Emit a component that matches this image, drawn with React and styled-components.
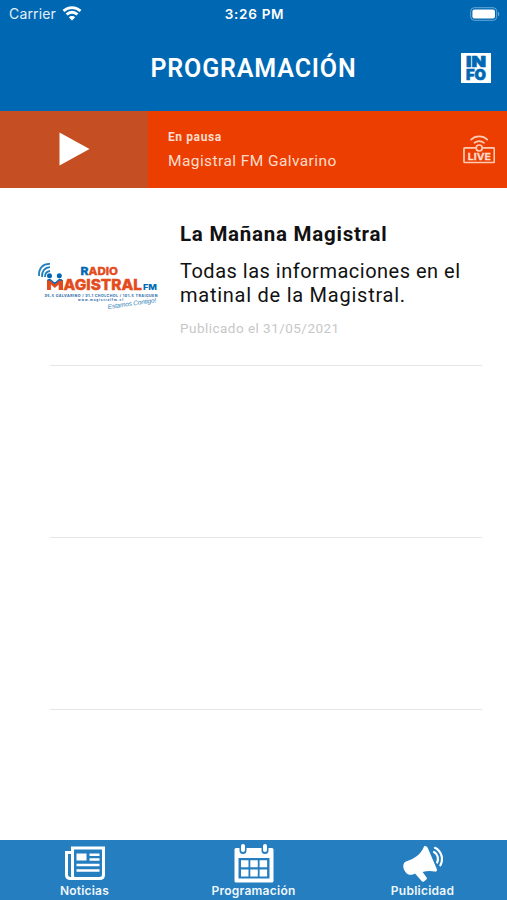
import React from 'react';
import styled, { createGlobalStyle } from 'styled-components';

const GlobalStyle = createGlobalStyle`
  * {
    box-sizing: border-box;
  }

  body {
    margin: 0;
    background: #ffffff;
    font-family: 'Roboto', 'Liberation Sans', sans-serif;
  }
`;

const Screen = styled.div`
  display: flex;
  flex-direction: column;
  width: 507px;
  height: 900px;
  overflow: hidden;
  background: #ffffff;
`;

const StatusBar = styled.div`
  display: grid;
  grid-template-columns: 1fr auto 1fr;
  align-items: center;
  height: 27px;
  padding: 0 7px 0 9px;
  background: #0068b3;
  color: #ffffff;
  font-family: 'Inter', sans-serif;
  font-size: 14px;
  line-height: 26px;
`;

const Carrier = styled.div`
  display: flex;
  align-items: center;
  gap: 6px;
  height: 26px;
  color: #e3f0f8;
  letter-spacing: 0.15px;
`;

const Clock = styled.div`
  padding-top: 1px;
  font-weight: 600;
  font-size: 13.5px;
  letter-spacing: 0.7px;
`;

const BatterySlot = styled.div`
  display: flex;
  justify-content: flex-end;
`;

const Header = styled.header`
  display: grid;
  grid-template-columns: 46px 1fr 30px;
  align-items: center;
  height: 84px;
  padding: 0 16px 2px 0;
  background: #0068b3;
`;

const HeaderTitle = styled.h1`
  grid-column: 2;
  margin: 2px 0 0;
  text-align: center;
  color: #ffffff;
  font-size: 25px;
  font-weight: 600;
  line-height: 30px;
  letter-spacing: 0.85px;
`;

const Player = styled.section`
  display: flex;
  height: 77px;
  background: #ec3e00;
  color: #ffdccb;
`;

const PlayButton = styled.button`
  display: flex;
  align-items: center;
  width: 148px;
  padding: 0 0 2px 59px;
  border: 0;
  background: #c54e22;
`;

const PlayerInfo = styled.div`
  flex: 1;
  padding: 17px 0 0 20px;
`;

const PlayerState = styled.div`
  font-size: 12px;
  font-weight: 700;
  line-height: 18px;
  letter-spacing: 0.6px;
`;

const PlayerStation = styled.div`
  margin-top: 5px;
  font-size: 15.5px;
  line-height: 20px;
  letter-spacing: 0.42px;
`;

const LiveSlot = styled.div`
  padding: 24px 12px 0 0;
`;

const List = styled.main`
  flex: 1;
`;

const Row = styled.article`
  display: flex;
  height: ${props => props.$height || 172}px;
  margin: 0 25px 0 50px;
  border-bottom: 1px solid #e6e6e6;
`;

const Thumb = styled.div`
  flex: none;
  width: 130px;
  padding-top: 72px;
  margin-left: -14px;
  margin-right: 14px;
`;

const RowBody = styled.div`
  flex: none;
  width: 310px;
  color: #111111;
`;

const RowTitle = styled.h2`
  margin: 34px 0 0;
  font-size: 20.5px;
  font-weight: 700;
  line-height: 24px;
  letter-spacing: 0.75px;
`;

const RowText = styled.p`
  margin: 13px 0 0;
  font-size: 20px;
  line-height: 24px;
`;

const TextLine = styled.span`
  display: block;
  letter-spacing: ${props => props.$spacing};
`;

const RowDate = styled.div`
  margin-top: 12px;
  color: #c7c7c7;
  font-size: 13.5px;
  line-height: 18px;
  letter-spacing: 0.47px;
`;

const TabBar = styled.nav`
  display: grid;
  grid-template-columns: repeat(3, 1fr);
  height: 60px;
  background: #257ebf;
`;

const Tab = styled.div`
  display: flex;
  flex-direction: column;
  align-items: center;
  padding-top: 4px;
  color: #eef7fc;
`;

const IconSlot = styled.div`
  display: flex;
  align-items: center;
  justify-content: center;
  height: 40px;
`;

const TabLabel = styled.span`
  margin-top: -1px;
  font-family: 'Inter', sans-serif;
  font-size: 12px;
  font-weight: 600;
  line-height: 15px;
  letter-spacing: ${props => props.$spacing || '0.2px'};
`;

const WifiIcon = () => (
  <svg width="20" height="15" viewBox="0 0 20 15" fill="none" stroke="#ffffff" strokeWidth="2.8">
    <path d="M1.5 5C6.2.4 13.8.4 18.5 5" />
    <path d="M4.6 8.500c3-3 7.800-3 10.800 0" />
    <path d="M10 14.400 6.800 11.200c1.700-1.700 4.700-1.700 6.400 0Z" fill="#ffffff" stroke="none" />
  </svg>
);

const BatteryIcon = () => (
  <svg width="30" height="14" viewBox="0 0 30 14">
    <rect x=".7" y=".7" width="26" height="12.6" rx="3.6" fill="none" stroke="#6aa8d4" />
    <rect x="2.4" y="2.4" width="22.6" height="9.2" rx="2" fill="#ffffff" />
    <path d="M28 4.7c1.7.7 1.7 3.9 0 4.6Z" fill="#6aa8d4" />
  </svg>
);

const InfoIcon = () => (
  <svg width="30" height="30" viewBox="0 0 30 30">
    <rect width="30" height="30" fill="#ffffff" />
    <g fill="#0068b3" stroke="#0068b3" strokeWidth=".6" fontFamily="Inter, sans-serif" fontWeight="900" fontSize="14.5">
      <text x="5" y="13.6" textLength="20" lengthAdjust="spacingAndGlyphs">IN</text>
      <text x="5" y="26.5" textLength="20" lengthAdjust="spacingAndGlyphs">FO</text>
    </g>
  </svg>
);

const LiveIcon = () => (
  <svg width="32" height="30" viewBox="0 0 32 30" fill="none" stroke="#ffcbb5" strokeWidth="1.7">
    <path d="M12.800 12.800H1.800q-.8 0-.8.8v13.100q0 .8.8.8h28.700q.8 0 .8-.8V13.600q0-.8-.8-.8H19.600" />
    <circle cx="16.2" cy="13" r="3" />
    <path d="M8.1 4.600c4.500-4.200 11.700-4.200 16.200 0M11.400 7.800c2.700-2.300 6.900-2.300 9.600 0" strokeLinecap="round" />
    <text x="4.8" y="24.600" textLength="23" fill="#ffdccb" stroke="#ffdccb" strokeWidth=".3" fontFamily="Inter, sans-serif" fontWeight="700" fontSize="9" lengthAdjust="spacingAndGlyphs">LIVE</text>
  </svg>
);

const StationLogo = () => (
  <svg width="130" height="56" viewBox="0 0 130 56">
    <g fill="none" stroke="#2380bd" strokeWidth="1.8">
      <path d="M3 16C2.5 8 7 3.5 14 3.8" />
      <path d="M6 17c-.3-6 3-9.6 8-9.8" />
      <path d="M9 17c0-3.5 2-5.7 5-6" />
    </g>
    <g fontFamily="Inter, sans-serif" fontWeight="800">
      <text x="44.5" y="15" fontSize="11" fill="#0068b3" stroke="#0068b3" strokeWidth=".3" textLength="8" lengthAdjust="spacingAndGlyphs">R</text>
      <text x="52.5" y="15" fontSize="11" fill="#e34a1c" stroke="#e34a1c" strokeWidth=".3" textLength="29.5" lengthAdjust="spacingAndGlyphs">ADIO</text>
      <text x="27.5" y="30" fontSize="15" fill="#e34a1c" stroke="#e34a1c" strokeWidth=".4" textLength="78.5" lengthAdjust="spacingAndGlyphs">AGISTRAL</text>
      <text x="107" y="30" fontSize="8" fill="#0068b3" textLength="14" lengthAdjust="spacingAndGlyphs">FM</text>
    </g>
    <g>
      <circle cx="13.5" cy="15.8" r="2.5" fill="#0068b3" />
      <circle cx="23.3" cy="15.8" r="2.5" fill="#0068b3" />
      <path d="M11 30V20l2.500-.5 5.300 4.500 5.200-4.500 3 .5v10h-4.300v-5.500l-3.900 3.500-3.900-3.500V30Z" fill="#e34a1c" />
      <path d="m11.500 20.200 2.500-.7 4.700 4 4.700-4 2.600.7" fill="none" stroke="#0068b3" strokeWidth="1.4" />
    </g>
    <g fill="#3a75ac" fontFamily="Inter, sans-serif" fontWeight="800">
      <text x="8.500" y="37" fontSize="3.6" textLength="113">95.5 GALVARINO / 91.1 CHOLCHOL / 101.5 TRAIGUEN</text>
      <text x="42" y="40.6" fontSize="3" textLength="45">www.magistralfm.cl</text>
    </g>
    <text x="72" y="49" fontSize="6.500" fill="#327fb6" fontFamily="Liberation Sans, sans-serif" fontStyle="italic" textLength="49" transform="rotate(-8 72 49)">Estamos Contigo!</text>
  </svg>
);

const NewsIcon = () => (
  <svg width="40" height="36" viewBox="0 0 40 36" fill="none" stroke="#ffffff" strokeWidth="3">
    <path d="M6 6.500H1.500V29c0 3 1.500 3.500 4 3.500H35" />
    <path d="M7.500 2h31v27c0 2.500-1.500 3.500-4 3.500H10c-2 0-2.500-1.500-2.500-3Z" />
    <rect x="11.500" y="7.5" width="10" height="7" fill="#ffffff" stroke="none" />
    <path d="M24.500 8.800H34.500M24.500 13.600H34.500M11.500 19h23M11.500 24.500h23" strokeWidth="2.500" />
  </svg>
);

const CalendarIcon = () => (
  <svg width="40" height="40" viewBox="0 0 40 40">
    <path d="M2 4h3.500v2.500a3.500 3.500 0 0 0 7 0V4h15v2.500a3.500 3.500 0 0 0 7 0V4H38q1.500 0 1.500 1.500v31.500q0 1.500-1.500 1.500H2Q.5 38.500.5 37V5.500Q.5 4 2 4Z" fill="#ffffff" />
    <rect x="7" y="0" width="4" height="8" rx="2" fill="#ffffff" />
    <rect x="29" y="0" width="4" height="8" rx="2" fill="#ffffff" />
    <path d="M4.500 14h31v20.500h-31Z" fill="#257ebf" />
    <path d="M7 16.300h7.500v7H7ZM16.300 16.300h7.500v7h-7.500ZM25.600 16.300h7.500v7h-7.500ZM7 25.500h7.500v7H7ZM16.300 25.500h7.500v7h-7.500ZM25.600 25.500h7.500v7h-7.500Z" fill="#ffffff" />
  </svg>
);

const MegaphoneIcon = () => (
  <svg width="40" height="38" viewBox="0 0 40 38" fill="#ffffff">
    <path d="M21 1.500c1.500-1 3 0 3.800 1.500l9 21c.6 2-.5 3-2.200 2.600-4-1-8-.8-12 .5l4 5.500c.6 1 .2 1.600-.6 2.200L21 36.500c-1 .6-1.800.3-2.600-.7L12 28.600l-2 .8c-2.500 1-5 .3-6.800-1.500C1 25.500-.3 22.500.5 19.500c.5-1.800 1.800-2.600 3.800-3.400 7-2.700 13.200-6 16.700-14.600Z" />
    <g fill="none" stroke="#ffffff" strokeWidth="2.200" strokeLinecap="round">
      <path d="M31 7c3.500 2 5 6.500 3.200 10.500" />
      <path d="M32 2.800c6.500 3.500 8.800 11 5.400 17.500" />
    </g>
  </svg>
);

const tabs = [
  { label: 'Noticias', icon: NewsIcon, spacing: '0.2px' },
  { label: 'Programación', icon: CalendarIcon, spacing: '0.25px' },
  { label: 'Publicidad', icon: MegaphoneIcon, spacing: '0.25px' }
];

const App = () => {
  return (
    <Screen>
      <GlobalStyle />
      <StatusBar>
        <Carrier>Carrier <WifiIcon /></Carrier>
        <Clock>3:26 PM</Clock>
        <BatterySlot><BatteryIcon /></BatterySlot>
      </StatusBar>

      <Header>
        <HeaderTitle>PROGRAMACIÓN</HeaderTitle>
        <InfoIcon />
      </Header>

      <Player>
        <PlayButton aria-label="Reproducir">
          <svg width="31" height="34" viewBox="0 0 31 34">
            <path d="M.5.500 30.500 17 .5 33.500Z" fill="#ffffff" />
          </svg>
        </PlayButton>
        <PlayerInfo>
          <PlayerState>En pausa</PlayerState>
          <PlayerStation>Magistral FM Galvarino</PlayerStation>
        </PlayerInfo>
        <LiveSlot><LiveIcon /></LiveSlot>
      </Player>

      <List>
        <Row $height={178}>
          <Thumb><StationLogo /></Thumb>
          <RowBody>
            <RowTitle>La Mañana Magistral</RowTitle>
            <RowText>
              <TextLine $spacing="0.5px">Todas las informaciones en el</TextLine>
              <TextLine $spacing="0.75px">matinal de la Magistral.</TextLine>
            </RowText>
            <RowDate>Publicado el 31/05/2021</RowDate>
          </RowBody>
        </Row>
        <Row />
        <Row />
      </List>

      <TabBar>
        {tabs.map((tab) => {
          const Icon = tab.icon;
          return (
            <Tab key={tab.label}>
              <IconSlot><Icon /></IconSlot>
              <TabLabel $spacing={tab.spacing}>{tab.label}</TabLabel>
            </Tab>
          );
        })}
      </TabBar>
    </Screen>
  );
};

export default App;
